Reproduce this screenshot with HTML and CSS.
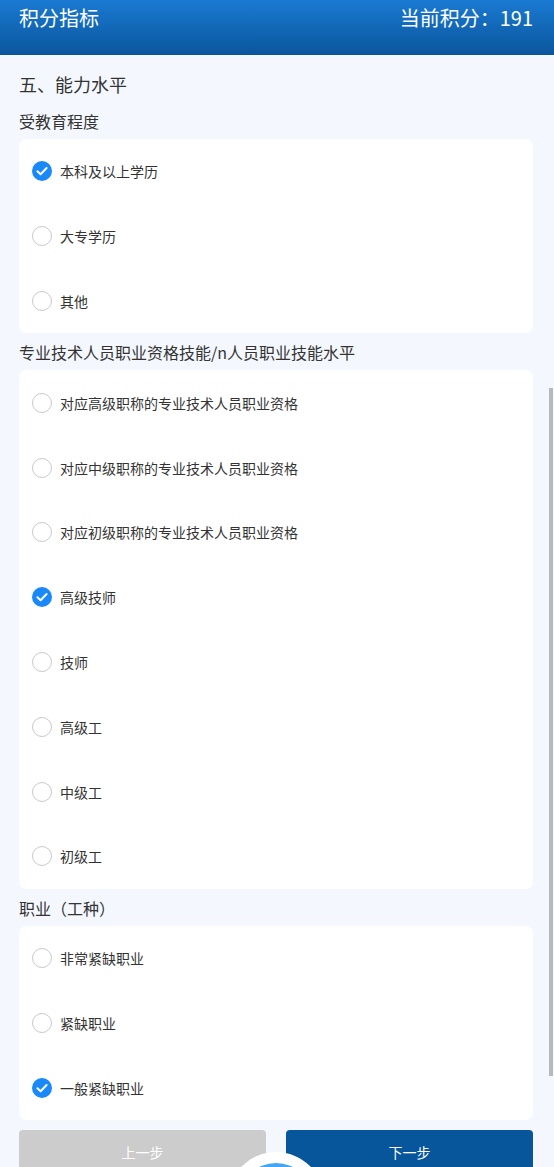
FILE: index.html
```html
<!DOCTYPE html>
<html lang="zh-CN">
<head>
<meta charset="utf-8">
<title>积分指标</title>
<link rel="stylesheet" href="styles.css">
</head>
<body>
<header class="topbar">
  <div class="topbar-title">积分指标</div>
  <div class="topbar-score">当前积分：191</div>
</header>
<main class="content">
  <h2 class="section-title">五、能力水平</h2>

  <div class="group-label">受教育程度</div>
  <div class="card">
    <div class="option"><span class="radio checked"><svg viewBox="0 0 20 20"><circle cx="10" cy="10" r="10" fill="#1989fa"/><polyline points="5.4,10.3 8.6,13.3 14.6,7" fill="none" stroke="#fff" stroke-width="2" stroke-linecap="round" stroke-linejoin="round"/></svg></span><span class="option-text">本科及以上学历</span></div>
    <div class="option"><span class="radio"></span><span class="option-text">大专学历</span></div>
    <div class="option"><span class="radio"></span><span class="option-text">其他</span></div>
  </div>

  <div class="group-label">专业技术人员职业资格技能/n人员职业技能水平</div>
  <div class="card">
    <div class="option"><span class="radio"></span><span class="option-text">对应高级职称的专业技术人员职业资格</span></div>
    <div class="option"><span class="radio"></span><span class="option-text">对应中级职称的专业技术人员职业资格</span></div>
    <div class="option"><span class="radio"></span><span class="option-text">对应初级职称的专业技术人员职业资格</span></div>
    <div class="option"><span class="radio checked"><svg viewBox="0 0 20 20"><circle cx="10" cy="10" r="10" fill="#1989fa"/><polyline points="5.4,10.3 8.6,13.3 14.6,7" fill="none" stroke="#fff" stroke-width="2" stroke-linecap="round" stroke-linejoin="round"/></svg></span><span class="option-text">高级技师</span></div>
    <div class="option"><span class="radio"></span><span class="option-text">技师</span></div>
    <div class="option"><span class="radio"></span><span class="option-text">高级工</span></div>
    <div class="option"><span class="radio"></span><span class="option-text">中级工</span></div>
    <div class="option"><span class="radio"></span><span class="option-text">初级工</span></div>
  </div>

  <div class="group-label">职业（工种）</div>
  <div class="card">
    <div class="option"><span class="radio"></span><span class="option-text">非常紧缺职业</span></div>
    <div class="option"><span class="radio"></span><span class="option-text">紧缺职业</span></div>
    <div class="option"><span class="radio checked"><svg viewBox="0 0 20 20"><circle cx="10" cy="10" r="10" fill="#1989fa"/><polyline points="5.4,10.3 8.6,13.3 14.6,7" fill="none" stroke="#fff" stroke-width="2" stroke-linecap="round" stroke-linejoin="round"/></svg></span><span class="option-text">一般紧缺职业</span></div>
  </div>

  <div class="actions">
    <button class="btn btn-prev">上一步</button>
    <button class="btn btn-next">下一步</button>
  </div>
</main>
<div class="fab"><div class="fab-inner"></div></div>
<div class="scrollbar"></div>
</body>
</html>
```
FILE: styles.css
```css
html, body {
  margin: 0;
  padding: 0;
}
body {
  background: #f4f8fe;
  font-family: "Noto Sans CJK SC", "Noto Sans", sans-serif;
  color: #333;
  position: relative;
  height: 1167px;
  overflow: hidden;
}
.topbar {
  height: 55px;
  box-sizing: border-box;
  padding: 4px 21px 0 19px;
  background: linear-gradient(to bottom, #1a7ad2, #0a569c);
  color: #fff;
  display: flex;
  justify-content: space-between;
  align-items: flex-start;
  font-size: 20px;
  line-height: 28px;
}
.content {
  padding: 0 21px 0 19px;
}
.section-title {
  margin: 0;
  height: 47px;
  box-sizing: border-box;
  padding-top: 17px;
  font-size: 18px;
  line-height: 24px;
  font-weight: normal;
  color: #333;
}
.group-label {
  height: 37px;
  box-sizing: border-box;
  padding-top: 8px;
  font-size: 16px;
  line-height: 22px;
  color: #333;
  white-space: nowrap;
}
.card {
  background: #fff;
  border-radius: 8px;
}
.option {
  height: 64.8px;
  display: flex;
  align-items: center;
  padding-left: 13px;
  gap: 8px;
}
.radio {
  width: 20px;
  height: 20px;
  box-sizing: border-box;
  border: 1px solid #c8c9cc;
  border-radius: 50%;
  flex: none;
  display: block;
}
.radio.checked {
  border: none;
}
.radio svg {
  display: block;
  width: 20px;
  height: 20px;
}
.option-text {
  font-size: 14px;
  line-height: 20px;
  color: #333;
}
.actions {
  display: flex;
  gap: 20px;
  padding-top: 10px;
}
.btn {
  flex: 1;
  height: 44px;
  border: none;
  border-radius: 4px;
  color: #fff;
  font-family: inherit;
  font-size: 14px;
  padding: 0;
}
.btn-prev {
  background: #cccccc;
}
.btn-next {
  background: #07559a;
}
.fab {
  position: absolute;
  left: 228px;
  top: 1152px;
  width: 96px;
  height: 96px;
  border-radius: 50%;
  background: #fff;
  display: flex;
  justify-content: center;
  padding-top: 11px;
  box-sizing: border-box;
}
.fab-inner {
  width: 74px;
  height: 74px;
  border-radius: 50%;
  background: #43a6f2;
}
.scrollbar {
  position: absolute;
  left: 549px;
  top: 388px;
  width: 4px;
  height: 688px;
  background: #b8b9bd;
}
```
